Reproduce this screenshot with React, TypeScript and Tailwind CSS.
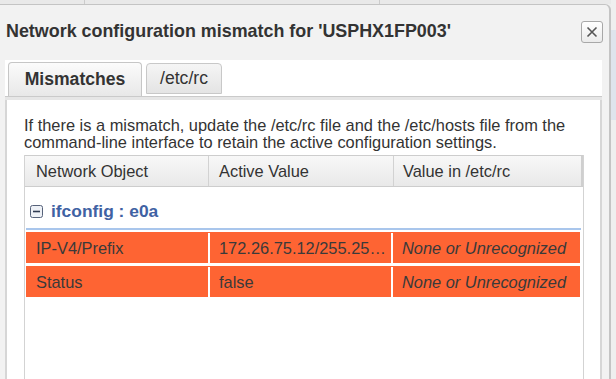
import React from 'react';

const rows = [
  { name: 'IP-V4/Prefix', active: '172.26.75.12/255.255.255.0', rc: 'None or Unrecognized' },
  { name: 'Status', active: 'false', rc: 'None or Unrecognized' },
];

function MinusBox() {
  return (
    <svg width="13" height="13" viewBox="0 0 13 13">
      <rect x="0.5" y="0.5" width="12" height="12" rx="2" fill="#eef1f6" stroke="#56627a" />
      <line x1="3" y1="6.5" x2="10" y2="6.5" stroke="#2f3b52" strokeWidth="1.6" />
    </svg>
  );
}

export default function App() {
  return (
    <div className="flex h-[379px] w-[616px] overflow-hidden bg-[#eeeeee] font-['Liberation_Sans',Arial,sans-serif] text-[#333]">
      <div className="flex w-[611px] flex-col">
        {/* page behind the dialog */}
        <div className="flex h-[4px] shrink-0 bg-[#e9e9e9]">
          <div className="w-[85px] border-r border-[#cccccc]" />
          <div className="w-[295px] border-r border-[#cccccc]" />
        </div>

        <div className="flex min-h-0 flex-1 flex-col rounded-tr-[6px] border-t border-r-2 border-[#c4c4c4] bg-[#f2f2f2]">
          {/* Title */}
          <div className="flex h-[55px] shrink-0 items-center justify-between pl-[6px] pr-[6px]">
            <h1 className="pb-[2px] text-[17.9px] font-bold leading-none text-[#333]">
              Network configuration mismatch for 'USPHX1FP003'
            </h1>
            <button className="mb-[1px] flex h-[22px] w-[22px] items-center justify-center rounded-[3px] border border-[#a8a8a8] bg-gradient-to-b from-white to-[#ebebeb]">
              <svg width="14" height="14" viewBox="0 0 14 14">
                <path d="M2.5 2.5 L11.5 11.5 M11.5 2.5 L2.5 11.5" stroke="#555" strokeWidth="1.6" />
              </svg>
            </button>
          </div>

          {/* Tabs */}
          <div className="ml-[5px] mr-[7px] flex min-h-0 flex-1 flex-col bg-white">
            <div className="flex h-[36px] shrink-0 items-end gap-[4px] pl-[3px]">
              <div className="flex h-[34px] w-[134px] items-center justify-center rounded-t-[4px] border border-b-0 border-[#c6c6c6] bg-gradient-to-b from-[#fbfbfb] to-[#e8e8e8] text-[17.6px] font-bold">
                Mismatches
              </div>
              <div className="mb-[2px] flex h-[31px] w-[76px] items-center justify-center rounded-t-[4px] border border-[#c8c8c8] bg-gradient-to-b from-[#f5f5f5] to-[#e4e4e4] text-[17.6px]">
                /etc/rc
              </div>
            </div>
            <div className="h-[4px] shrink-0 border-t border-[#cacaca] bg-[#e6e6e6]" />

            {/* Tab content */}
            <div className="flex min-h-0 flex-1 flex-col border-x-2 border-[#d6d6d6] pl-[17px] pr-[16px]">
              <p className="pt-[17px] text-[16.4px] leading-[17px] text-[#333]">
                If there is a mismatch, update the /etc/rc file and the /etc/hosts file from the command-line interface to retain the active configuration settings.
              </p>

              <div className="mt-[4px] flex w-[560px] flex-1 flex-col border-x border-[#d3d3d3]">
                {/* Header */}
                <div className="flex h-[32px] shrink-0 border-y border-[#cdcdcd] bg-gradient-to-b from-[#f8f8f8] to-[#e9e9e9] text-[16.4px]">
                  <div className="flex w-[184px] items-center border-r border-[#d2d2d2] pl-[11px]">Network Object</div>
                  <div className="flex w-[185px] items-center border-r border-[#d2d2d2] pl-[10px]">Active Value</div>
                  <div className="flex flex-1 items-center border-r-2 border-[#cfcfcf] pl-[9px]">Value in /etc/rc</div>
                </div>

                {/* Group */}
                <div className="flex h-[41px] shrink-0 items-center gap-[8px] pl-[5px] pt-[8px]">
                  <MinusBox />
                  <span className="text-[17.4px] font-bold text-[#3f62a3]">ifconfig : e0a</span>
                </div>
                <div className="ml-[1px] mr-[2px] h-[2px] shrink-0 bg-[#a9c6ec]" />

                <div className="ml-[1px] mr-[3px] flex flex-col gap-[3px] pt-[2px] text-[16.4px] text-[#3a3a3a]">
                  {rows.map((r) => (
                    <div key={r.name} className="flex h-[31px] bg-[#fe6433] pt-[1px]">
                      <div className="flex w-[184px] items-center border-r-2 border-white pl-[10px]">{r.name}</div>
                      <div className="flex w-[183px] min-w-0 items-center border-r-2 border-white pl-[9px] pr-[1px]">
                        <span className="truncate">{r.active}</span>
                      </div>
                      <div className="flex flex-1 items-center pl-[9px] italic">{r.rc}</div>
                    </div>
                  ))}
                </div>
              </div>
            </div>
          </div>
        </div>
      </div>

      {/* page to the right */}
      <div className="flex w-[5px] flex-col">
        <div className="h-[30px] bg-[#efefef]" />
        <div className="h-[90px] bg-[#dfe4ec]" />
        <div className="flex-1 bg-[#efefef]" />
      </div>
    </div>
  );
}
